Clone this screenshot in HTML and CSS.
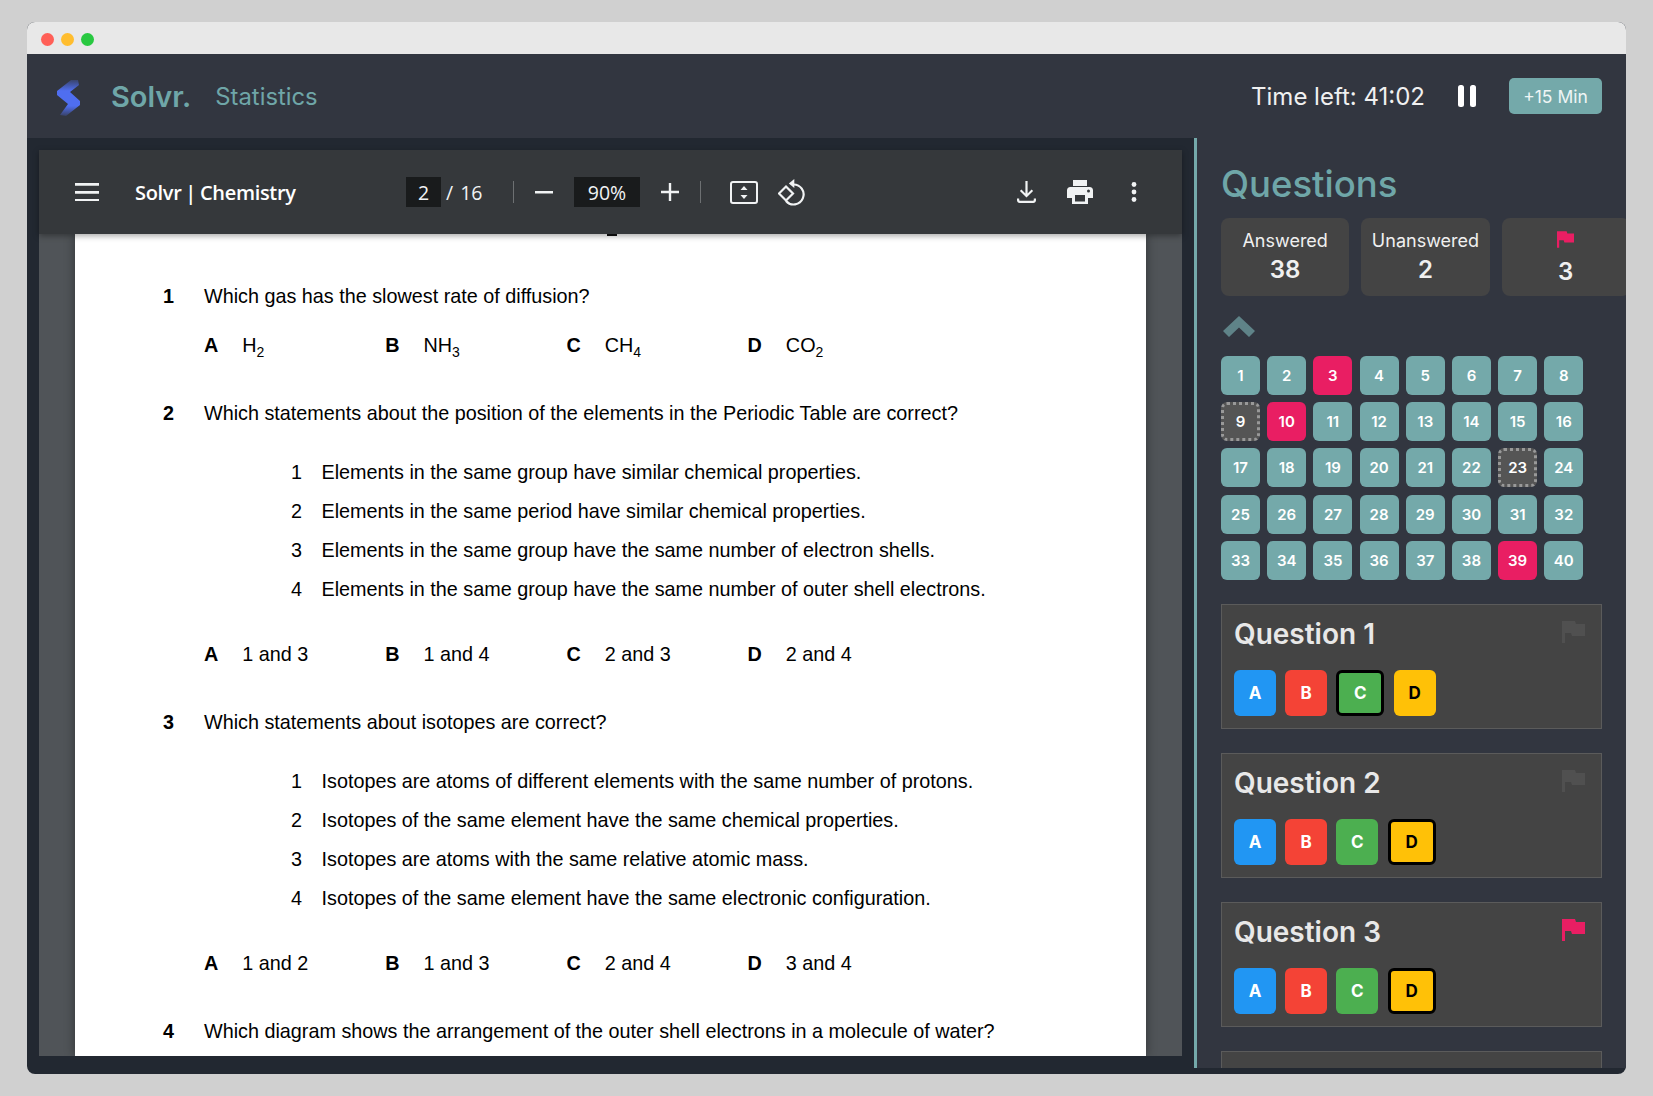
FILE: index.html
```html
<!DOCTYPE html>
<html lang="en">
<head>
<meta charset="utf-8">
<title>Solvr</title>
<link rel="stylesheet" href="styles.css">
</head>
<body>
<div class="window">
  <div class="titlebar"><span class="dot red"></span><span class="dot yellow"></span><span class="dot green"></span></div>
  <header class="topbar">
    <svg class="logo" width="24" height="36" viewBox="0 0 24 36"><defs><linearGradient id="lg" x1="0" y1="0" x2="0" y2="1"><stop offset="0" stop-color="#4f6ef0" stop-opacity=".25"/><stop offset=".3" stop-color="#4f6ef0"/><stop offset=".72" stop-color="#4f6ef0"/><stop offset="1" stop-color="#4f6ef0" stop-opacity=".2"/></linearGradient></defs><path d="M21 0 L14 0 L0 11 L0 15 L11 24 L3 35 L9 36 L23 25 L23 21 L13 12 L22 5Z" fill="url(#lg)"/></svg>
    <span class="brand">Solvr.</span>
    <span class="crumb">Statistics</span>
    <span class="timer">Time left: 41:02</span>
    <svg class="pause" width="18" height="22" viewBox="0 0 18 22"><rect x="0" y="0" width="6" height="22" rx="2.5"/><rect x="12" y="0" width="6" height="22" rx="2.5"/></svg>
    <button class="extend">+15 Min</button>
  </header>
  <div class="main">
    <section class="viewer">
      <div class="toolbar">
        <svg class="tb-menu" width="24" height="18" viewBox="0 0 24 18"><path d="M0 0h24v2.7H0zM0 8h24v2.7H0zM0 16h24v2.700H0z"/></svg>
        <span class="doc-title">Solvr | Chemistry</span>
        <span class="field page-field">2</span>
        <span class="page-total">/ 16</span>
        <span class="sep sep-a"></span>
        <svg class="tb-minus" width="18" height="18" viewBox="0 0 18 18"><path d="M0 8h18v2.4H0z"/></svg>
        <span class="field zoom-field">90%</span>
        <svg class="tb-plus" width="18" height="18" viewBox="0 0 18 18"><path d="M0 7.8h7.8V0h2.4v7.8H18v2.4h-7.8V18H7.8v-7.8H0z"/></svg>
        <span class="sep sep-b"></span>
        <svg class="tb-fit" width="28" height="23" viewBox="0 0 28 23"><rect x="1" y="1" width="26" height="21" rx="2" fill="none" stroke="#f1f3f4" stroke-width="2"/><path d="M14 5l3.500 4h-7zM14 18l-3.500-4h7z"/></svg>
        <svg class="tb-rotate" width="27" height="27" viewBox="0 0 27 27"><path d="M15 5.500a10 10 0 1 1-7 16.500" fill="none" stroke="#f1f3f4" stroke-width="2.200"/><path d="M16.300 0v9l-5.500-4.500z"/><path d="M8 7.500L15 14.500 8 21.500 1 14.500z" fill="#35383b" stroke="#f1f3f4" stroke-width="2.200"/></svg>
        <span class="spacer"></span>
        <svg class="tb-down" width="19" height="22" viewBox="0 0 19 22"><path d="M8.400 0h2.200v12.500l4-4 1.500 1.500-6.600 6.600-6.600-6.600 1.500-1.500 4 4zM0 17.500h2.200v1.300c0 .6.400 1 1 1h12.600c.6 0 1-.4 1-1v-1.300H19v1.800c0 1.500-1.200 2.700-2.700 2.700H2.700C1.200 22 0 20.800 0 19.300z"/></svg>
        <svg class="tb-print" width="26" height="24" viewBox="0 0 26 24"><path d="M6 0h14v6H6zM3.500 7h19A3.500 3.500 0 0 1 26 10.500V18h-5v6H5v-6H0v-7.500A3.500 3.500 0 0 1 3.500 7zM8 15v6.500h10V15zM21.500 9.500a1.500 1.500 0 1 0 0 3 1.500 1.500 0 0 0 0-3z" fill-rule="evenodd"/></svg>
        <svg class="tb-more" width="6" height="20" viewBox="0 0 6 20"><circle cx="3" cy="2.500" r="2.400"/><circle cx="3" cy="10" r="2.400"/><circle cx="3" cy="17.500" r="2.400"/></svg>
      </div>
      <div class="pane">
        <article class="page">
          <span class="tick"></span>
          <div class="q q1"><b>1</b><span>Which gas has the slowest rate of diffusion?</span></div>
          <div class="opts o1"><div><b>A</b><span>H<sub>2</sub></span></div><div><b>B</b><span>NH<sub>3</sub></span></div><div><b>C</b><span>CH<sub>4</sub></span></div><div><b>D</b><span>CO<sub>2</sub></span></div></div>
          <div class="q q2"><b>2</b><span>Which statements about the position of the elements in the Periodic Table are correct?</span></div>
          <ol class="list">
            <li><i>1</i>Elements in the same group have similar chemical properties.</li>
            <li><i>2</i>Elements in the same period have similar chemical properties.</li>
            <li><i>3</i>Elements in the same group have the same number of electron shells.</li>
            <li><i>4</i>Elements in the same group have the same number of outer shell electrons.</li>
          </ol>
          <div class="opts o2"><div><b>A</b><span>1 and 3</span></div><div><b>B</b><span>1 and 4</span></div><div><b>C</b><span>2 and 3</span></div><div><b>D</b><span>2 and 4</span></div></div>
          <div class="q q3"><b>3</b><span>Which statements about isotopes are correct?</span></div>
          <ol class="list">
            <li><i>1</i>Isotopes are atoms of different elements with the same number of protons.</li>
            <li><i>2</i>Isotopes of the same element have the same chemical properties.</li>
            <li><i>3</i>Isotopes are atoms with the same relative atomic mass.</li>
            <li><i>4</i>Isotopes of the same element have the same electronic configuration.</li>
          </ol>
          <div class="opts o2"><div><b>A</b><span>1 and 2</span></div><div><b>B</b><span>1 and 3</span></div><div><b>C</b><span>2 and 4</span></div><div><b>D</b><span>3 and 4</span></div></div>
          <div class="q q4"><b>4</b><span>Which diagram shows the arrangement of the outer shell electrons in a molecule of water?</span></div>
        </article>
      </div>
    </section>
    <aside class="sidebar">
      <h2 class="side-title">Questions</h2>
      <div class="stats">
        <div class="stat"><span class="stat-label">Answered</span><strong>38</strong></div>
        <div class="stat"><span class="stat-label">Unanswered</span><strong>2</strong></div>
        <div class="stat stat-flag"><svg class="flag-small" width="17" height="17" viewBox="0 0 23 22"><path d="M0 0h13l1 3h9v12H10l-1-3H3v10H0z"/></svg><strong>3</strong></div>
      </div>
      <svg class="chevron" width="32" height="21" viewBox="0 0 32 21"><path d="M16 0l16 15-6 6-10-9.500L6 21l-6-6z"/></svg>
      <div class="grid">
        <button class="n">1</button><button class="n">2</button><button class="n hot">3</button><button class="n">4</button><button class="n">5</button><button class="n">6</button><button class="n">7</button><button class="n">8</button>
        <button class="n open">9</button><button class="n hot">10</button><button class="n">11</button><button class="n">12</button><button class="n">13</button><button class="n">14</button><button class="n">15</button><button class="n">16</button>
        <button class="n">17</button><button class="n">18</button><button class="n">19</button><button class="n">20</button><button class="n">21</button><button class="n">22</button><button class="n open">23</button><button class="n">24</button>
        <button class="n">25</button><button class="n">26</button><button class="n">27</button><button class="n">28</button><button class="n">29</button><button class="n">30</button><button class="n">31</button><button class="n">32</button>
        <button class="n">33</button><button class="n">34</button><button class="n">35</button><button class="n">36</button><button class="n">37</button><button class="n">38</button><button class="n hot">39</button><button class="n">40</button>
      </div>
      <div class="card">
        <div class="card-head"><h3>Question 1</h3><svg class="flag" width="23" height="22" viewBox="0 0 23 22"><path d="M0 0h13l1 3h9v12H10l-1-3H3v10H0z"/></svg></div>
        <div class="answers"><button class="a blue">A</button><button class="a red-b">B</button><button class="a green-b picked">C</button><button class="a amber">D</button></div>
      </div>
      <div class="card">
        <div class="card-head"><h3>Question 2</h3><svg class="flag" width="23" height="22" viewBox="0 0 23 22"><path d="M0 0h13l1 3h9v12H10l-1-3H3v10H0z"/></svg></div>
        <div class="answers"><button class="a blue">A</button><button class="a red-b">B</button><button class="a green-b">C</button><button class="a amber picked">D</button></div>
      </div>
      <div class="card">
        <div class="card-head"><h3>Question 3</h3><svg class="flag on" width="23" height="22" viewBox="0 0 23 22"><path d="M0 0h13l1 3h9v12H10l-1-3H3v10H0z"/></svg></div>
        <div class="answers"><button class="a blue">A</button><button class="a red-b">B</button><button class="a green-b">C</button><button class="a amber picked">D</button></div>
      </div>
      <div class="card"></div>
    </aside>
  </div>
</div>
</body>
</html>
```
FILE: styles.css
```css
* { box-sizing: border-box; }
html, body { margin: 0; height: 100%; }
body { background: #d0d0d0; padding: 22px 27px; font-family: Inter, "Liberation Sans", sans-serif; overflow: hidden; }
button { font-family: inherit; border: 0; padding: 0; }
.window { width: 1599px; height: 1052px; border-radius: 8px; overflow: hidden; background: #222831; display: flex; flex-direction: column; }
.titlebar { height: 32px; background: #e8e8e8; display: flex; align-items: center; gap: 7px; padding: 2px 0 0 13.500px; flex: none; }
.dot { width: 13px; height: 13px; border-radius: 50%; }
.red { background: #ff5f57; }
.yellow { background: #ffbd2e; }
.green { background: #28c840; }
.topbar { height: 84px; flex: none; background: #323640; display: flex; align-items: center; padding: 0 24px 0 30px; }
.logo { margin-top: 4px; }
.brand { margin-left: 30px; font-size: 29px; font-weight: 600; color: #6fa6a8; }
.crumb { margin-left: 24px; font-size: 23.800px; color: #6fa6a8; }
.timer { margin-left: auto; font-size: 24px; color: #f0f0f0; }
.pause { fill: #fff; margin-left: 33px; }
.extend { margin-left: 33px; width: 93px; height: 36px; border-radius: 5px; background: #74a9aa; color: #eef5f5; font-size: 17.500px; }
.main { flex: 1; min-height: 0; display: flex; }
.viewer { width: 1167px; flex: none; padding: 12px 12px 18px; display: flex; flex-direction: column; }
.toolbar { height: 84px; flex: none; background: #35383b; display: flex; align-items: center; padding: 0 45px 0 36px; color: #f1f3f4; fill: #f1f3f4; position: relative; z-index: 1; box-shadow: 0 2px 6px rgba(0,0,0,.35); font-family: "Open Sans", "Noto Sans", sans-serif; }
.toolbar svg { flex: none; }
.doc-title { margin-left: 36px; font-size: 20px; font-weight: 600; width: 271px; white-space: nowrap; letter-spacing: -.32px; word-spacing: -1px; padding-top: 1px; color: #fff; }
.field { background: #191b1c; height: 30px; display: flex; align-items: center; justify-content: center; font-size: 19.500px; }
.page-field { width: 35px; }
.page-total { margin-left: 5px; font-size: 19.500px; width: 67px; word-spacing: 2px; }
.sep { width: 1px; height: 22px; background: #6d7072; }
.tb-minus { margin-left: 21px; }
.zoom-field { margin-left: 21px; width: 66px; }
.tb-plus { margin-left: 21px; }
.sep-b { margin-left: 21px; }
.tb-fit { margin-left: 29px; }
.tb-rotate { margin-left: 20px; }
.spacer { flex: 1; }
.tb-print { margin-left: 31px; }
.tb-more { margin-left: 38px; }
.pane { flex: 1; min-height: 0; background: #505458; overflow: hidden; padding: 0 36px; }
.page { height: 100%; background: #fff; box-shadow: 0 0 10px rgba(0,0,0,.4); color: #000; font-family: "Liberation Sans", Arial, sans-serif; font-size: 19.800px; line-height: 24px; padding: 50px 0 0 88px; overflow: hidden; }
.tick { display: block; width: 10px; height: 2px; background: #111; margin: -50px 0 48px 444px; }
.q { display: flex; }
.q b { width: 41px; flex: none; }
.q2 { margin-top: 44px; }
.q3 { margin-top: 44px; }
.q4 { margin-top: 44px; }
.opts { display: grid; grid-template-columns: repeat(4, 181.200px); margin: 25px 0 0 41px; }
.opts div { display: flex; }
.opts b { width: 38.300px; flex: none; }
.o2 { margin-top: 41px; }
sub { font-size: 14px; line-height: 0; vertical-align: -5px; }
.list { list-style: none; margin: 35px 0 0 128px; padding: 0; display: flex; flex-direction: column; gap: 15px; }
.list li { display: flex; }
.list i { font-style: normal; width: 30.500px; flex: none; }
.sidebar { flex: 1; min-width: 0; height: 930px; border-left: 3px solid #74a9aa; background: #323640; overflow: hidden; padding: 25px 24px 0; }
.side-title { margin: -1px 0 12px; font-size: 36.500px; line-height: 44px; font-weight: 500; color: #6fa6a8; }
.stats { display: flex; gap: 12px; width: 440px; }
.stat { flex: none; width: 128.300px; height: 78px; border-radius: 8px; background: #444; color: #f0f0f0; display: flex; flex-direction: column; align-items: center; padding-top: 11px; }
.stat-label { font-size: 18px; line-height: 24px; }
.stat strong { font-size: 24px; line-height: 32px; font-weight: 600; margin-top: 1px; }
.stat-flag { padding-top: 10px; }
.stat-flag strong { margin-top: 4px; }
.flag-small { fill: #e91e63; margin: 3px 0 4px; }
.chevron { display: block; fill: #5f8388; margin: 20px 0 19px 2px; }
.grid { display: grid; grid-template-columns: repeat(8, 39px); gap: 7.200px; }
.n { height: 39px; border-radius: 6px; background: #74a9aa; color: #fff; font-size: 15px; font-weight: 600; }
.hot { background: #e91e63; }
.open { background: #555; border: 3px dotted #999; }
.card { height: 125px; margin-top: 24px; border: 1px solid #5b5b5b; background: #444; padding: 12px 12px 0; }
.card-head { display: flex; justify-content: space-between; }
.card h3 { margin: 0; font-size: 28px; line-height: 34px; font-weight: 600; color: #e8e8e8; }
.flag { fill: #505050; margin: 4px 4px 0 0; }
.flag.on { fill: #e91e63; }
.answers { display: flex; gap: 9.200px; margin-top: 19px; }
.a { width: 42px; height: 46px; border-radius: 6px; color: #fff; font-size: 17px; font-weight: 700; }
.blue { background: #2196f3; }
.red-b { background: #f44336; }
.green-b { background: #4caf50; }
.amber { background: #ffc107; color: #000; }
.picked { width: 48px; border: 3px solid #000; }
```
